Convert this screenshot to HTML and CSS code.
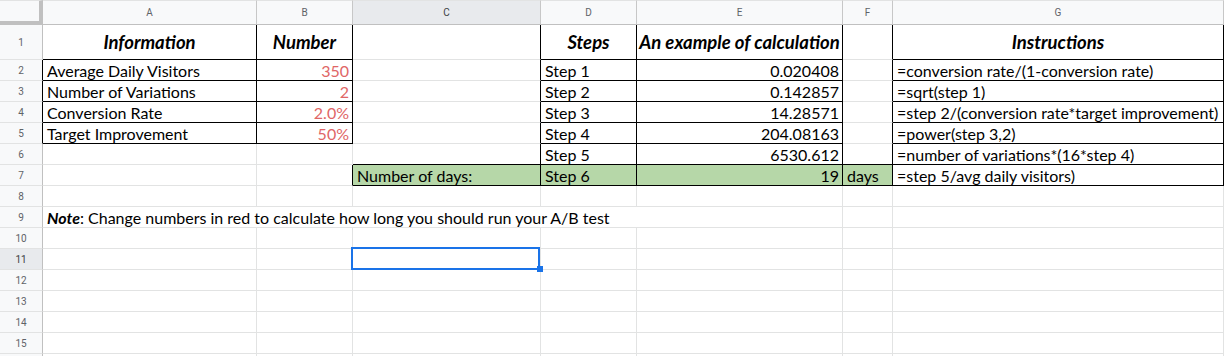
FILE: index.html
```html
<html lang="en">
<head>
    <meta charset="utf-8">
    <title>A/B test duration</title>
    <link rel="stylesheet" href="styles.css">
</head>

<body>
<div class="sheet">
    <!-- column headers -->
    <div class="corner"></div>
    <div class="ch">A</div>
    <div class="ch">B</div>
    <div class="ch on">C</div>
    <div class="ch">D</div>
    <div class="ch">E</div>
    <div class="ch">F</div>
    <div class="ch">G</div>

    <!-- 1 -->
    <div class="rh">1</div>
    <div class="c hd br bb">Information</div>
    <div class="c hd br bb">Number</div>
    <div class="c br"></div>
    <div class="c hd br bb">Steps</div>
    <div class="c hd br bb">An example of calculation</div>
    <div class="c br"></div>
    <div class="c hd br bb">Instructions</div>

    <!-- 2 -->
    <div class="rh br">2</div>
    <div class="c br bb">Average Daily Visitors</div>
    <div class="c num red br bb">350</div>
    <div class="c br"></div>
    <div class="c br bb">Step 1</div>
    <div class="c num br bb">0.020408</div>
    <div class="c br"></div>
    <div class="c br bb">=conversion rate/(1-conversion rate)</div>

    <!-- 3 -->
    <div class="rh br">3</div>
    <div class="c br bb">Number of Variations</div>
    <div class="c num red br bb">2</div>
    <div class="c br"></div>
    <div class="c br bb">Step 2</div>
    <div class="c num br bb">0.142857</div>
    <div class="c br"></div>
    <div class="c br bb">=sqrt(step 1)</div>

    <!-- 4 -->
    <div class="rh br">4</div>
    <div class="c br bb">Conversion Rate</div>
    <div class="c num red br bb">2.0%</div>
    <div class="c br"></div>
    <div class="c br bb">Step 3</div>
    <div class="c num br bb">14.28571</div>
    <div class="c br"></div>
    <div class="c br bb">=step 2/(conversion rate*target improvement)</div>

    <!-- 5 -->
    <div class="rh br">5</div>
    <div class="c br bb">Target Improvement</div>
    <div class="c num red br bb">50%</div>
    <div class="c br"></div>
    <div class="c br bb">Step 4</div>
    <div class="c num br bb">204.08163</div>
    <div class="c br"></div>
    <div class="c br bb">=power(step 3,2)</div>

    <!-- 6 -->
    <div class="rh">6</div>
    <div class="c"></div>
    <div class="c"></div>
    <div class="c br bb"></div>
    <div class="c br bb">Step 5</div>
    <div class="c num br bb">6530.612</div>
    <div class="c br bb"></div>
    <div class="c br bb">=number of variations*(16*step 4)</div>

    <!-- 7 -->
    <div class="rh">7</div>
    <div class="c"></div>
    <div class="c br"></div>
    <div class="c green br bb">Number of days:</div>
    <div class="c green br bb">Step 6</div>
    <div class="c num green br bb">19</div>
    <div class="c green br bb">days</div>
    <div class="c br bb">=step 5/avg daily visitors)</div>

    <!-- 8 -->
    <div class="rh">8</div>
    <div class="c"></div><div class="c"></div><div class="c"></div><div class="c"></div>
    <div class="c"></div><div class="c"></div><div class="c"></div>

    <!-- 9 -->
    <div class="rh">9</div>
    <div class="c note"><b><i>Note</i></b>: Change numbers in red to calculate how long you should run your A/B test</div>
    <div class="c"></div><div class="c"></div>

    <!-- 10 -->
    <div class="rh">10</div>
    <div class="c"></div><div class="c"></div><div class="c"></div><div class="c"></div>
    <div class="c"></div><div class="c"></div><div class="c"></div>

    <!-- 11 -->
    <div class="rh on">11</div>
    <div class="c"></div>
    <div class="c"></div>
    <div class="c sel"><span class="box"></span><span class="handle"></span></div>
    <div class="c"></div><div class="c"></div><div class="c"></div><div class="c"></div>

    <!-- 12 -->
    <div class="rh">12</div>
    <div class="c"></div><div class="c"></div><div class="c"></div><div class="c"></div>
    <div class="c"></div><div class="c"></div><div class="c"></div>

    <!-- 13 -->
    <div class="rh">13</div>
    <div class="c"></div><div class="c"></div><div class="c"></div><div class="c"></div>
    <div class="c"></div><div class="c"></div><div class="c"></div>

    <!-- 14 -->
    <div class="rh">14</div>
    <div class="c"></div><div class="c"></div><div class="c"></div><div class="c"></div>
    <div class="c"></div><div class="c"></div><div class="c"></div>

    <!-- 15 -->
    <div class="rh">15</div>
    <div class="c"></div><div class="c"></div><div class="c"></div><div class="c"></div>
    <div class="c"></div><div class="c"></div><div class="c"></div>

    <!-- 16, only its top edge shows -->
    <div class="rh"></div>
    <div class="c"></div><div class="c"></div><div class="c"></div><div class="c"></div>
    <div class="c"></div><div class="c"></div><div class="c"></div>
</div>
</body>
</html>
```

FILE: styles.css
```css
body {
    margin: 0;
    background: #fff;
    overflow: hidden;
}

.sheet {
    display: grid;
    grid-template-columns: 43px 214px 96px 188px 96px 206px 50px 331px;
    grid-template-rows: 25px 35px repeat(15, 21px);
}

.sheet > div {
    box-sizing: border-box;
    min-width: 0;
}

/* headers */
.corner {
    background: #f8f9fa;
    border-top: 1px solid #e2e3e3;
    border-right: 4px solid #c0c0c0;
    border-bottom: 4px solid #c0c0c0;
}

.ch {
    display: flex;
    align-items: center;
    justify-content: center;

    background: #f8f9fa;
    border-top: 1px solid #e2e3e3;
    border-right: 1px solid #c7c7c7;
    border-bottom: 1px solid #c0c0c0;

    font: 10px "Roboto", sans-serif;
    color: #5f6368;
}

.rh {
    display: flex;
    align-items: center;
    justify-content: center;

    background: #f8f9fa;
    border-right: 1px solid #c0c0c0;
    border-bottom: 1px solid #e2e3e3;

    font: 10px "Roboto", sans-serif;
    color: #5f6368;
}

.ch.on,
.rh.on {
    background: #e8eaed;
    color: #3c4043;
}

/* cells */
.c {
    display: flex;
    align-items: center;
    padding: 1px 3px 0 4px;

    border-right: 1px solid #e2e3e3;
    border-bottom: 1px solid #e2e3e3;

    font: 16px "Lato", sans-serif;
    color: #000;
    white-space: nowrap;
}

.rh.br,
.c.br {
    border-right-color: #000;
}

.c.bb {
    border-bottom-color: #000;
}

.hd {
    justify-content: center;
    padding: 0 2px;
    font-size: 18.5px;
    font-weight: bold;
    font-style: italic;
}

.num {
    justify-content: flex-end;
}

.red {
    color: #e06666;
}

.green {
    background: #b6d7a8;
}

.note {
    grid-column: span 5;
}

.note b {
    font-weight: bold;
}

/* selected cell */
.sel {
    position: relative;
}

.sel .box {
    position: absolute;
    left: -2px;
    top: -2px;
    right: 0;
    bottom: -1px;
    border: 2px solid #1a73e8;
}

.sel .handle {
    position: absolute;
    right: -3px;
    bottom: -3px;
    width: 6px;
    height: 6px;
    background: #1a73e8;
}
```
